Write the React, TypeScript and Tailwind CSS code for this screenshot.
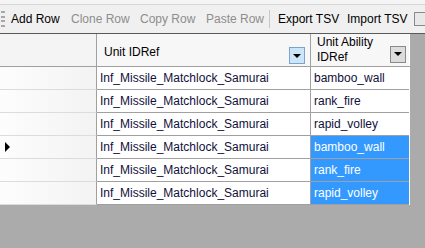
import React from "react";

type Row = { unit: string; ability: string; selected: boolean; current?: boolean };

const rows: Row[] = [
  { unit: "Inf_Missile_Matchlock_Samurai", ability: "bamboo_wall", selected: false },
  { unit: "Inf_Missile_Matchlock_Samurai", ability: "rank_fire", selected: false },
  { unit: "Inf_Missile_Matchlock_Samurai", ability: "rapid_volley", selected: false },
  { unit: "Inf_Missile_Matchlock_Samurai", ability: "bamboo_wall", selected: true, current: true },
  { unit: "Inf_Missile_Matchlock_Samurai", ability: "rank_fire", selected: true },
  { unit: "Inf_Missile_Matchlock_Samurai", ability: "rapid_volley", selected: true },
];

function DropButton({ active }: { active?: boolean }) {
  return (
    <div
      className={`w-[16px] h-[17px] border flex items-center justify-center ${
        active ? "bg-[#cde6f7] border-[#7da2ce]" : "bg-[#dcdcdc] border-[#8a8a8a]"
      }`}
    >
      <div className="w-0 h-0 border-l-[4px] border-r-[4px] border-t-[4px] border-l-transparent border-r-transparent border-t-black" />
    </div>
  );
}

export default function App() {
  return (
    <div
      className="w-[425px] h-[248px] bg-[#ababab] overflow-hidden text-black"
      style={{ fontFamily: '"Liberation Sans", Arial, sans-serif' }}
    >
      {/* Toolbar */}
      <div className="bg-[#f5f5f5] h-[5px] border-b border-[#d6d6d6]" />
      <div className="bg-[#f0f0f0] h-[29px] border-b border-[#5a5a5a] flex items-center text-[12px] whitespace-nowrap">
        <div className="w-[4px] h-[16px] ml-[1px] flex flex-col justify-between shrink-0">
          <div className="h-[2px] bg-[#a8a8a8]" />
          <div className="h-[2px] bg-[#a8a8a8]" />
          <div className="h-[2px] bg-[#a8a8a8]" />
          <div className="h-[2px] bg-[#a8a8a8]" />
        </div>
        <span className="ml-[6px] w-[49px] shrink-0">Add Row</span>
        <span className="ml-[11px] w-[58px] shrink-0 text-[#8d8d8d]">Clone Row</span>
        <span className="ml-[11px] w-[56px] shrink-0 text-[#8d8d8d]">Copy Row</span>
        <span className="ml-[10px] w-[56px] shrink-0 text-[#8d8d8d]">Paste Row</span>
        <span className="ml-[7px] w-px h-[18px] bg-[#c8c8c8] shrink-0" />
        <span className="ml-[8px] w-[59px] shrink-0">Export TSV</span>
        <span className="ml-[10px] w-[62px] shrink-0">Import TSV</span>
        <span className="ml-[5px] w-[12px] h-[14px] border border-[#8a8a8a] bg-[#e8e8e8] shrink-0" />
      </div>

      {/* Grid */}
      <div className="flex">
        <div className="w-[410px] bg-white">
          {/* Header */}
          <div className="flex h-[33px] border-b border-[#a0a0a0] text-[12px]">
            <div className="w-[97px] bg-[#f4f4f4] border-r border-[#a0a0a0]" />
            <div className="w-[214px] bg-[#f7f7f7] border-r border-[#a0a0a0] flex items-center pl-[7px] pr-[5px] pt-[3px]">
              <span className="flex-1">Unit IDRef</span>
              <div className="mt-[8px]">
                <DropButton active />
              </div>
            </div>
            <div className="w-[98px] bg-[#f7f7f7] flex items-center pl-[6px] pr-[3px]">
              <span className="flex-1 leading-[15px]">
                Unit Ability
                <br />
                IDRef
              </span>
              <div className="mt-[8px]">
                <DropButton />
              </div>
            </div>
          </div>

          {/* Rows */}
          {rows.map((r, i) => (
            <div key={i} className="flex h-[23px] text-[12px]">
              <div className="w-[97px] border-r border-[#a0a0a0] border-b border-b-[#dcdcdc] bg-gradient-to-r from-[#fdfdfd] to-[#f3f3f3] flex items-center pl-[5px]">
                {r.current && (
                  <div className="w-0 h-0 border-t-[5px] border-b-[5px] border-l-[5px] border-t-transparent border-b-transparent border-l-black" />
                )}
              </div>
              <div className="w-[214px] border-r border-b border-[#a0a0a0] flex items-center pl-[3px] text-[#10103a]">
                {r.unit}
              </div>
              <div
                className={`w-[98px] border-b border-[#a0a0a0] flex items-center pl-[3px] ${
                  r.selected ? "bg-[#3399ff] text-white" : "text-[#10103a]"
                }`}
              >
                {r.ability}
              </div>
            </div>
          ))}
        </div>
      </div>
    </div>
  );
}
